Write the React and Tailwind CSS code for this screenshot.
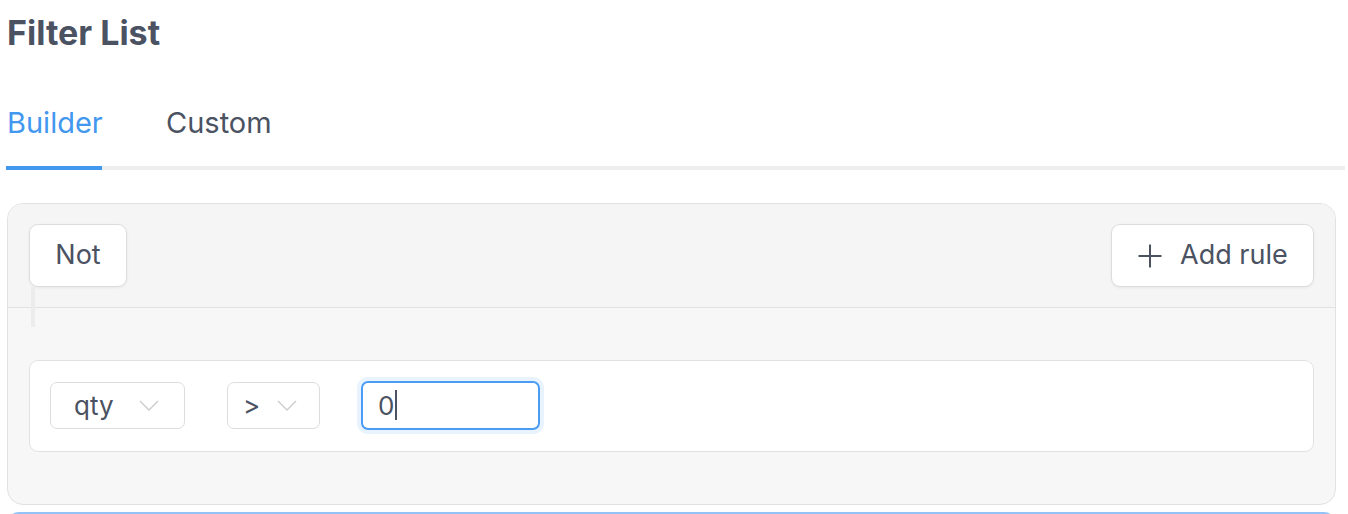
import React from "react";

function Chevron() {
  return (
    <svg width="20" height="11" viewBox="0 0 20 11" fill="none" className="shrink-0">
      <path d="M1 1 L10 10 L19 1" stroke="#cbcbcb" strokeWidth="1.3" />
    </svg>
  );
}

function Plus() {
  return (
    <svg width="24" height="24" viewBox="0 0 24 24" fill="none" className="shrink-0">
      <path d="M12 0.5 V23.5 M0.5 12 H23.5" stroke="#4b5262" strokeWidth="2" />
    </svg>
  );
}

export default function App() {
  return (
    <div className="w-[1348px] h-[514px] overflow-hidden bg-white text-[#4b5262]" style={{ fontFamily: "Inter, 'Noto Sans', sans-serif" }}>
      <div className="pl-[7px] pt-[12px] h-[53px]">
        <h1 className="text-[34px] leading-[41px] font-bold text-[#4b5262]">Filter List</h1>
      </div>
      <div className="mt-[53px] ml-[6px] mr-[3px] border-b-4 border-[#eeeeee] flex">
        <div className="relative pb-[26px] text-[29px] leading-[34px] text-[#4297ef] w-[96px]">
          <span className="pl-[1px]">Builder</span>
          <div className="absolute left-0 right-0 -bottom-[4px] h-[4px] bg-[#4297ef]" />
        </div>
        <div className="ml-[64px] pb-[26px] text-[29px] leading-[34px] text-[#4b5262]">Custom</div>
      </div>
      <div className="mt-[33px] ml-[7px] w-[1329px] h-[302px] border-[1.5px] border-[#e2e2e2] rounded-[16px] overflow-hidden bg-[#f7f7f7] flex flex-col">
        <div className="bg-[#f5f5f5] border-b-[1.5px] border-[#e2e2e2] px-[21px] pt-[20px] pb-[20px] flex justify-between items-start">
          <div className="relative">
            <button className="h-[63px] w-[98px] bg-white border-[1.5px] border-[#dddddd] rounded-[9px] shadow-[0_1px_3px_rgba(0,0,0,0.06)] text-[27px] text-[#4b5262] flex items-center justify-center">
              Not
            </button>
            <div className="absolute left-[2px] top-[63px] w-[4px] h-[40px] bg-[#ececec]" />
          </div>
          <button className="h-[63px] w-[203px] bg-white border-[1.5px] border-[#dddddd] rounded-[9px] shadow-[0_1px_3px_rgba(0,0,0,0.06)] text-[27px] text-[#4b5262] flex items-center pl-[26px] gap-[18px]">
            <Plus />
            <span>Add rule</span>
          </button>
        </div>
        <div className="px-[21px] pt-[52px]">
          <div className="h-[92px] bg-white border-[1.5px] border-[#e2e2e2] rounded-[9px] flex items-center pl-[20px] pb-[2px]">
            <div className="h-[47px] w-[135px] border-[1.5px] border-[#dddddd] rounded-[7px] flex items-center pl-[23px] gap-[25px] text-[26px]">
              <span>qty</span>
              <Chevron />
            </div>
            <div className="ml-[42px] h-[47px] w-[93px] border-[1.5px] border-[#dddddd] rounded-[7px] flex items-center pl-[15px] gap-[17px] text-[26px]">
              <span>&gt;</span>
              <Chevron />
            </div>
            <div className="ml-[41px] h-[49px] w-[179px] border-2 border-[#4a9cf4] rounded-[7px] ring-4 ring-[#e8f3fe] flex items-center pl-[15px] text-[26px]">
              <span>0</span>
              <span className="w-[2px] h-[30px] bg-[#4b5262] ml-[1px]" />
            </div>
          </div>
        </div>
      </div>
      <div className="mt-[7px] ml-[7px] w-[1329px] h-[40px] border-2 border-[#93c3f6] rounded-[12px]" />
    </div>
  );
}
